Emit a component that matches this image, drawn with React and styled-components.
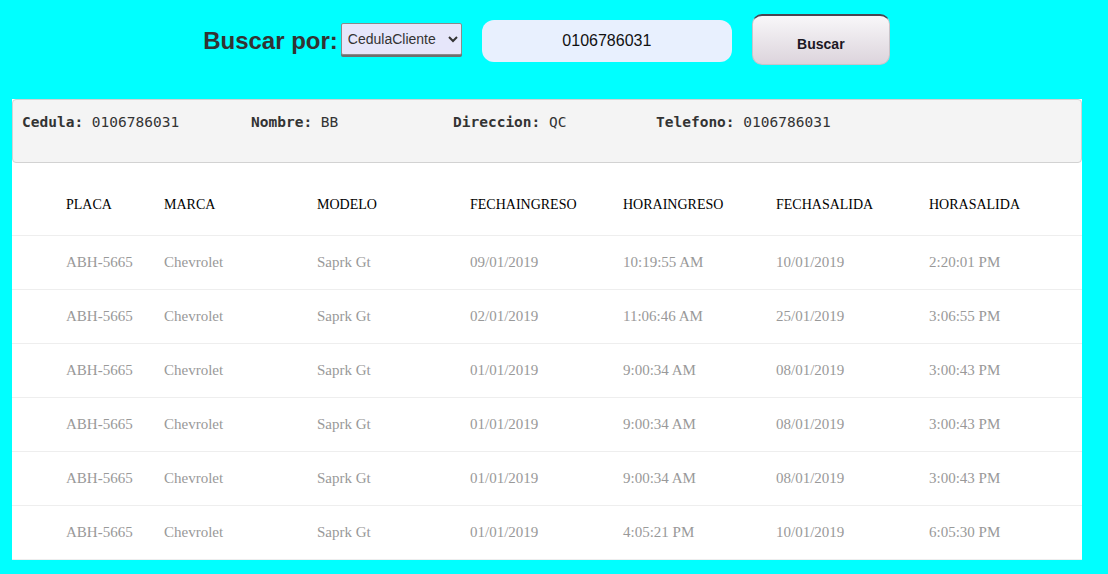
import React from 'react'
import styled, { createGlobalStyle } from 'styled-components'

const GlobalStyle = createGlobalStyle`
  body {
    margin: 0;
    background-color: #00ffff;
  }
`

const Page = styled.div`
  min-height: 100vh;
  box-sizing: border-box;
  padding: 14px 26px 0px 12px;
  background-color: #00ffff;
`
const SearchBar = styled.div`
  display: flex;
  justify-content: center;
  align-items: center;
  height: 51px;
  margin-bottom: 34px;
  padding-right: 1px;
`
const SearchLabel = styled.label`
  font-family: Arial, "Liberation Sans", sans-serif;
  font-size: 24px;
  font-weight: bold;
  color: #333333;
  margin-right: 3px;
  padding-top: 3px;
`
const FieldSelect = styled.select`
  width: 121px;
  height: 32px;
  margin-top: -2px;
  font-family: Arial, "Liberation Sans", sans-serif;
  font-size: 14px;
  color: #333333;
  background-color: #e6e6fa;
  border: 1px solid #8a8a8a;
  border-radius: 2px;
  box-shadow: 0 2px 0 #6f6f6f;
  padding: 0 2px;
  margin-right: 20px;
`
const SearchInput = styled.input`
  width: 250px;
  height: 42px;
  box-sizing: border-box;
  border: none;
  outline: none;
  border-radius: 12px;
  background-color: #e8f0fe;
  font-family: Arial, "Liberation Sans", sans-serif;
  font-size: 16px;
  color: #111;
  caret-color: #000;
  text-align: center;
  margin-top: 3px;
  margin-right: 20px;
`
const SearchButton = styled.button`
  width: 138px;
  height: 51px;
  border-radius: 10px;
  border: 1px solid #c9c3c9;
  border-top: 2px solid #4a4550;
  background: linear-gradient(#f8f7f9, #dcd4dc);
  font-family: Arial, "Liberation Sans", sans-serif;
  font-size: 14px;
  font-weight: bold;
  color: #1c1824;
  padding-top: 9px;
  cursor: pointer;
`

const Panel = styled.div`
  width: 1070px;
  height: 461px;
  background-color: white;
  overflow: hidden;
`
const ClientBox = styled.div`
  display: grid;
  grid-template-columns: 229px 202px 203px auto;
  align-items: start;
  height: 64px;
  box-sizing: border-box;
  padding: 14px 9px 0px 9px;
  background-color: #f4f4f4;
  border: 1px solid #d2d2d2;
  border-radius: 4px;
  font-family: "DejaVu Sans Mono", "Liberation Mono", monospace;
  font-size: 14.5px;
  color: #333;
`
const ClientField = styled.div`
  white-space: nowrap;
  line-height: 17px;
`
const FieldKey = styled.span`
  font-weight: bold;
`
const Row = styled.div`
  display: grid;
  grid-template-columns: 98px 153px 153px 153px 153px 153px auto;
  align-items: center;
  padding-left: 54px;
  height: ${props => (props.header ? '73px' : '54px')};
  box-sizing: border-box;
  padding-top: ${props => (props.header ? '12px' : '0px')};
  border-bottom: 1px solid #eeeeee;
  font-family: "Times New Roman", "Liberation Serif", serif;
  font-size: ${props => (props.header ? '14px' : '15px')};
  color: ${props => (props.header ? '#000000' : '#999999')};
`
const Cell = styled.div`
  white-space: nowrap;
`

const columns = ['PLACA', 'MARCA', 'MODELO', 'FECHAINGRESO', 'HORAINGRESO', 'FECHASALIDA', 'HORASALIDA']

const visits = [
  ['ABH-5665', 'Chevrolet', 'Saprk Gt', '09/01/2019', '10:19:55 AM', '10/01/2019', '2:20:01 PM'],
  ['ABH-5665', 'Chevrolet', 'Saprk Gt', '02/01/2019', '11:06:46 AM', '25/01/2019', '3:06:55 PM'],
  ['ABH-5665', 'Chevrolet', 'Saprk Gt', '01/01/2019', '9:00:34 AM', '08/01/2019', '3:00:43 PM'],
  ['ABH-5665', 'Chevrolet', 'Saprk Gt', '01/01/2019', '9:00:34 AM', '08/01/2019', '3:00:43 PM'],
  ['ABH-5665', 'Chevrolet', 'Saprk Gt', '01/01/2019', '9:00:34 AM', '08/01/2019', '3:00:43 PM'],
  ['ABH-5665', 'Chevrolet', 'Saprk Gt', '01/01/2019', '4:05:21 PM', '10/01/2019', '6:05:30 PM'],
]

const client = [
  ['Cedula:', '0106786031'],
  ['Nombre:', 'BB'],
  ['Direccion:', 'QC'],
  ['Telefono:', '0106786031'],
]

export default function App() {
  return (
    <Page>
      <GlobalStyle />
      <SearchBar>
        <SearchLabel>Buscar por:</SearchLabel>
        <FieldSelect defaultValue="CedulaCliente">
          <option>CedulaCliente</option>
          <option>Placa</option>
        </FieldSelect>
        <SearchInput defaultValue="0106786031" autoFocus />
        <SearchButton>Buscar</SearchButton>
      </SearchBar>
      <Panel>
        <ClientBox>
          {client.map(([k, v]) => (
            <ClientField key={k}>
              <FieldKey>{k}</FieldKey> {v}
            </ClientField>
          ))}
        </ClientBox>
        <Row header>
          {columns.map(c => <Cell key={c}>{c}</Cell>)}
        </Row>
        {visits.map((v, i) => (
          <Row key={i}>
            {v.map((c, j) => <Cell key={j}>{c}</Cell>)}
          </Row>
        ))}
      </Panel>
    </Page>
  )
}
